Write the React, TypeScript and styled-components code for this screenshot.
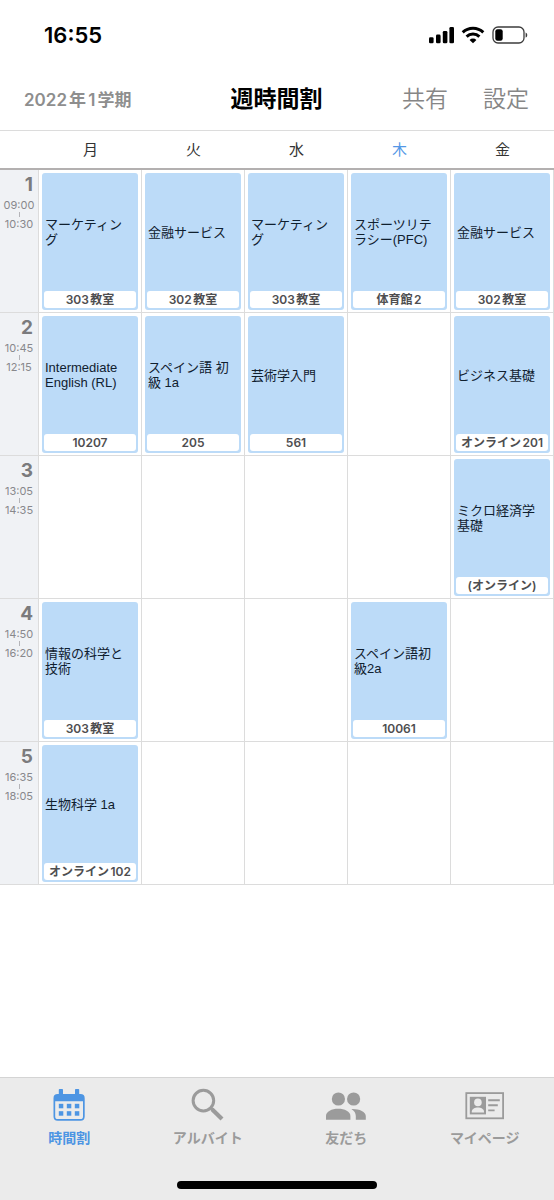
import React from "react";
import styled, { createGlobalStyle } from "styled-components";

const GlobalStyle = createGlobalStyle`
  *, *::before, *::after { box-sizing: border-box; }
  body {
    margin: 0;
    background: #fff;
    color: #000;
    font-family: Inter, "Noto Sans CJK JP", sans-serif;
    text-autospace: normal;
  }
  button {
    margin: 0;
    padding: 0;
    border: 0;
    background: none;
    color: inherit;
    font: inherit;
    cursor: pointer;
  }
`;

const Screen = styled.div`
  display: flex;
  flex-direction: column;
  min-height: 100vh;
`;

const StatusBar = styled.div`
  display: flex;
  align-items: center;
  justify-content: space-between;
  height: 70px;
  padding: 0 26px 0 44px;
`;

const Clock = styled.time`
  font-size: 22px;
  line-height: 28px;
  font-weight: 600;
`;

const StatusIcons = styled.svg`
  display: block;
  width: 100px;
  height: 20px;
`;

const Header = styled.header`
  display: grid;
  grid-template-columns: 1fr auto 1fr;
  align-items: center;
  height: 61px;
  padding: 0 25px 3px 24px;
  border-bottom: 1px solid #dcdcdc;
`;

const Term = styled.span`
  padding-top: 3px;
  color: #8e8e8e;
  font-size: 17px;
  line-height: 24px;
  font-weight: 600;
`;

const Title = styled.h1`
  margin: 0;
  font-size: 23px;
  line-height: 32px;
  font-weight: 700;
`;

const Actions = styled.div`
  display: flex;
  justify-content: flex-end;
  gap: 35px;
`;

const ActionButton = styled.button`
  && {
    color: #868686;
    font-size: 23px;
    line-height: 32px;
    font-weight: 350;
  }
`;

const Timetable = styled.table`
  width: 100%;
  table-layout: fixed;
  border-collapse: separate;
  border-spacing: 0;
`;

const Corner = styled.td`
  width: 39px;
  height: 39px;
  padding: 0;
  border-bottom: 2px solid #b3b0b0;
`;

const DayHead = styled.th<{ $today: boolean }>`
  height: 39px;
  padding: 0;
  border-bottom: 2px solid #b3b0b0;
  color: ${(p) => (p.$today ? "#5398e6" : "#333")};
  font-size: 15px;
  line-height: 20px;
  font-weight: 400;
`;

const PeriodHead = styled.th`
  height: 143px;
  padding: 3px 0 0;
  border: solid #dcdcdc;
  border-width: 0 1px 1px 0;
  background: #f0f2f5;
  vertical-align: top;
  font-weight: 400;
`;

const PeriodNumber = styled.div`
  padding-right: 5px;
  color: #7b7b7d;
  font-size: 19px;
  line-height: 24px;
  font-weight: 700;
  text-align: right;
`;

const PeriodTimes = styled.div`
  display: flex;
  flex-direction: column;
  align-items: center;
  padding-top: 1px;
  color: #88888c;
  font-size: 11px;
  line-height: 14px;
`;

const TimeDash = styled.span`
  width: 1px;
  height: 5px;
  background: #b4b4b8;
`;

const Slot = styled.td`
  height: 143px;
  padding: 3px 3px 2px;
  border: solid #dcdcdc;
  border-width: 0 1px 1px 0;
  vertical-align: top;
`;

const Course = styled.button`
  && {
    display: flex;
    flex-direction: column;
    width: 100%;
    height: 137px;
    padding: 0 2px 2px;
    border-radius: 3px;
    background: #bcdbf8;
    text-align: left;
  }
`;

const CourseName = styled.span`
  display: flex;
  flex: 1;
  align-items: center;
  padding: 0 4px 0 1px;
  color: #10202f;
  font-family: "Liberation Sans", "Noto Sans CJK JP", sans-serif;
  font-size: 13px;
  line-height: 15px;
  text-autospace: no-autospace;
`;

const Room = styled.span`
  height: 17px;
  border-radius: 3px;
  background: #fff;
  color: #4e4e50;
  font-size: 12px;
  line-height: 17px;
  font-weight: 600;
  text-align: center;
  white-space: nowrap;
`;

const TabBar = styled.footer`
  margin-top: auto;
  padding-bottom: 11px;
  border-top: 1px solid #d4d4d4;
  background: #ebebeb;
`;

const Tabs = styled.nav`
  display: flex;
`;

const Tab = styled.button<{ $active?: boolean }>`
  && {
    display: flex;
    flex: 1;
    flex-direction: column;
    align-items: center;
    gap: 6px;
    padding: 8px 0 33px;
    color: ${(p) => (p.$active ? "#4d95e3" : "#9b9b9b")};
    font-size: 14px;
    line-height: 20px;
    font-weight: 600;
  }
`;

const TabIcon = styled.svg`
  display: block;
  width: 42px;
  height: 36px;
`;

const HomeIndicator = styled.div`
  width: 36%;
  height: 8px;
  margin: 0 auto;
  border-radius: 4px;
  background: #000;
`;

type CourseInfo = { name: string; room: string };
type Period = { start: string; end: string; courses: (CourseInfo | null)[] };

const days = ["月", "火", "水", "木", "金"];
const today = "木";

const periods: Period[] = [
  {
    start: "09:00",
    end: "10:30",
    courses: [
      { name: "マーケティング", room: "303教室" },
      { name: "金融サービス", room: "302教室" },
      { name: "マーケティング", room: "303教室" },
      { name: "スポーツリテラシー(PFC)", room: "体育館2" },
      { name: "金融サービス", room: "302教室" },
    ],
  },
  {
    start: "10:45",
    end: "12:15",
    courses: [
      { name: "Intermediate English (RL)", room: "10207" },
      { name: "スペイン語 初級 1a", room: "205" },
      { name: "芸術学入門", room: "561" },
      null,
      { name: "ビジネス基礎", room: "オンライン201" },
    ],
  },
  {
    start: "13:05",
    end: "14:35",
    courses: [null, null, null, null, { name: "ミクロ経済学基礎", room: "(オンライン)" }],
  },
  {
    start: "14:50",
    end: "16:20",
    courses: [
      { name: "情報の科学と技術", room: "303教室" },
      null,
      null,
      { name: "スペイン語初級2a", room: "10061" },
      null,
    ],
  },
  {
    start: "16:35",
    end: "18:05",
    courses: [{ name: "生物科学 1a", room: "オンライン102" }, null, null, null, null],
  },
];

function StatusGlyphs() {
  return (
    <StatusIcons viewBox="0 0 100 20" aria-hidden="true">
      <rect x="1" y="12.2" width="4.6" height="6" rx="1.3" />
      <rect x="8" y="9.6" width="4.6" height="8.6" rx="1.3" />
      <rect x="14.8" y="6" width="4.6" height="12.2" rx="1.3" />
      <rect x="21.4" y="2" width="4.6" height="16.2" rx="1.3" />
      <g fill="none" stroke="#000" strokeWidth="3">
        <path d="M34.7 7.4 A15 15 0 0 1 55.3 7.4" />
        <path d="M38.6 11.6 A9.2 9.2 0 0 1 51.4 11.6" />
      </g>
      <path d="M45 18.3 L41.6 14.9 A4.8 4.8 0 0 1 48.4 14.9 Z" />
      <rect x="65" y="2" width="31" height="16" rx="5" fill="none" stroke="#3c3c3c" strokeWidth="1.3" />
      <rect x="67.3" y="4.2" width="7.4" height="11.6" rx="2.2" />
      <path d="M97.6 7.4 C99.8 8.2 99.8 11.8 97.6 12.6 Z" fill="#3c3c3c" />
    </StatusIcons>
  );
}

function CalendarIcon() {
  return (
    <TabIcon viewBox="0 0 42 36" aria-hidden="true">
      <path
        fill="currentColor"
        fillRule="evenodd"
        d="M11.6 3 H14.2 Q15 3 15 3.8 V8 H27 V3.8 Q27 3 27.8 3 H30.4 Q31.2 3 31.2 3.8 V8 H32.5 Q36.7 8 36.7 12.2 V30.6 Q36.7 34.8 32.5 34.8 H9.7 Q5.5 34.8 5.5 30.6 V12.2 Q5.5 8 9.7 8 H10.8 V3.8 Q10.8 3 11.6 3 Z M7.2 15.2 V30.4 Q7.2 33 9.8 33 H32.4 Q35 33 35 30.4 V15.2 Z"
      />
      <g fill="currentColor">
        <rect x="10.8" y="17.8" width="4.5" height="4.5" />
        <rect x="18.8" y="17.8" width="4.5" height="4.5" />
        <rect x="26.8" y="17.8" width="4.5" height="4.5" />
        <rect x="10.8" y="25.2" width="4.5" height="4.5" />
        <rect x="18.8" y="25.2" width="4.5" height="4.5" />
        <rect x="26.8" y="25.2" width="4.5" height="4.5" />
      </g>
    </TabIcon>
  );
}

function SearchIcon() {
  return (
    <TabIcon viewBox="0 0 42 36" fill="none" stroke="currentColor" aria-hidden="true">
      <circle cx="16.4" cy="14.6" r="10.3" strokeWidth="3" />
      <path d="M23.8 21.9 L25.6 23.7" strokeWidth="2.6" />
      <path d="M25 23.2 L35 33" strokeWidth="4.2" />
    </TabIcon>
  );
}

function FriendsIcon() {
  return (
    <TabIcon viewBox="0 0 42 36" fill="currentColor" aria-hidden="true">
      <circle cx="13.4" cy="13" r="6.6" />
      <circle cx="28.6" cy="13" r="6.6" />
      <path d="M1 33.8 V30 C1 25.4 6.8 22.8 13.2 22.8 S25.4 25.4 25.4 30 V33.8 Z" />
      <path d="M26.4 22.9 C34 22.6 40.8 25.4 40.8 30 V33.8 H30.8 V30 C30.8 26.8 29.2 24.6 26.4 22.9 Z" />
    </TabIcon>
  );
}

function ProfileIcon() {
  return (
    <TabIcon viewBox="0 0 42 36" aria-hidden="true">
      <rect x="2.3" y="7.1" width="36.8" height="25.2" fill="none" stroke="currentColor" strokeWidth="1.8" />
      <rect x="5.8" y="10.8" width="16.2" height="17.6" fill="currentColor" />
      <circle cx="13.9" cy="16.4" r="3.8" fill="#ebebeb" />
      <path d="M7.8 26.6 V25.6 C7.8 22.8 11 21.4 13.9 21.4 S20 22.8 20 25.6 V26.6 Z" fill="#ebebeb" />
      <path d="M24.2 14.2 H35.8 M24.2 19.2 H33.8 M24.2 24.4 H30.6" stroke="currentColor" strokeWidth="1.9" />
    </TabIcon>
  );
}

export default function App() {
  return (
    <Screen>
      <GlobalStyle />
      <StatusBar>
        <Clock>16:55</Clock>
        <StatusGlyphs />
      </StatusBar>
      <Header>
        <Term>2022年1学期</Term>
        <Title>週時間割</Title>
        <Actions>
          <ActionButton type="button">共有</ActionButton>
          <ActionButton type="button">設定</ActionButton>
        </Actions>
      </Header>
      <Timetable>
        <thead>
          <tr>
            <Corner />
            {days.map((day) => (
              <DayHead key={day} scope="col" $today={day === today}>
                {day}
              </DayHead>
            ))}
          </tr>
        </thead>
        <tbody>
          {periods.map((period, i) => (
            <tr key={period.start}>
              <PeriodHead scope="row">
                <PeriodNumber>{i + 1}</PeriodNumber>
                <PeriodTimes>
                  <span>{period.start}</span>
                  <TimeDash />
                  <span>{period.end}</span>
                </PeriodTimes>
              </PeriodHead>
              {period.courses.map((course, d) => (
                <Slot key={days[d]}>
                  {course && (
                    <Course type="button">
                      <CourseName>{course.name}</CourseName>
                      <Room>{course.room}</Room>
                    </Course>
                  )}
                </Slot>
              ))}
            </tr>
          ))}
        </tbody>
      </Timetable>
      <TabBar>
        <Tabs>
          <Tab type="button" $active aria-current="page">
            <CalendarIcon />
            時間割
          </Tab>
          <Tab type="button">
            <SearchIcon />
            アルバイト
          </Tab>
          <Tab type="button">
            <FriendsIcon />
            友だち
          </Tab>
          <Tab type="button">
            <ProfileIcon />
            マイページ
          </Tab>
        </Tabs>
        <HomeIndicator />
      </TabBar>
    </Screen>
  );
}
